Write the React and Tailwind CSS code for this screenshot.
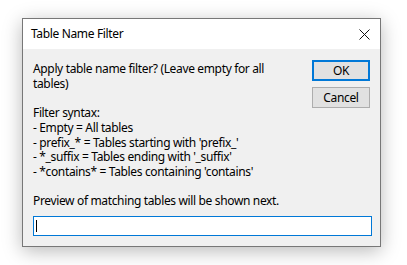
import React, { useState } from "react";

const font = { fontFamily: '"Noto Sans", "Segoe UI", sans-serif' };

const lines = [
  "Filter syntax:",
  "- Empty = All tables",
  "- prefix_* = Tables starting with 'prefix_'",
  "- *_suffix = Tables ending with '_suffix'",
  "- *contains* = Tables containing 'contains'",
];

const App = () => {
  const [filter, setFilter] = useState("");

  return (
    <div className="w-[407px] h-[265px] bg-white pt-[18px] pl-[22px] tracking-[-0.35px]" style={font}>
      <div className="w-[359px] h-[229px] border border-[#777777] bg-[#f0f0f0] flex flex-col shadow-[0_4px_18px_rgba(0,0,0,0.28)]">
        {/* Title bar */}
        <div className="h-[30px] bg-white flex items-center pl-[8px] pr-[10px] shrink-0">
          <span className="text-[12px] text-black">Table Name Filter</span>
          <button className="ml-auto w-[12px] h-[12px] flex items-center justify-center">
            <svg width="11" height="11" viewBox="0 0 11 11">
              <path d="M0.5 0.5 L10.5 10.5 M10.5 0.5 L0.5 10.5" stroke="#111" strokeWidth="1" />
            </svg>
          </button>
        </div>

        {/* Body */}
        <div className="flex-1 flex flex-col px-[10px] pt-[11px] text-[12px] leading-[14.7px] text-black">
          <div className="flex items-start">
            <div className="w-[262px] pt-[2px]">
              <div>Apply table name filter? (Leave empty for all tables)</div>
              <div className="h-[14.7px]" />
              {lines.map((l) => (
                <div key={l} className="whitespace-pre">{l}</div>
              ))}
              <div className="h-[14.7px]" />
              <div className="whitespace-nowrap">Preview of matching tables will be shown next.</div>
            </div>
            <div className="ml-auto flex flex-col gap-[6px]">
              <button className="w-[58px] h-[21px] bg-[#e1e1e1] border-2 border-[#0078d7] text-[12px] leading-none flex items-center justify-center">
                OK
              </button>
              <button className="w-[58px] h-[21px] bg-[#e1e1e1] border border-[#adadad] text-[12px] leading-none flex items-center justify-center">
                Cancel
              </button>
            </div>
          </div>

          <div className="relative mt-[7px] w-[339px]">
            <input
              className="w-full h-[20px] bg-white border border-[#0078d7] outline-none px-[3px] text-[12px] caret-transparent"
              value={filter}
              onChange={(e) => setFilter(e.target.value)}
            />
            <span className="absolute left-[3px] top-[4px] w-[1px] h-[12px] bg-black" />
          </div>
        </div>
      </div>
    </div>
  );
};

export default App;
